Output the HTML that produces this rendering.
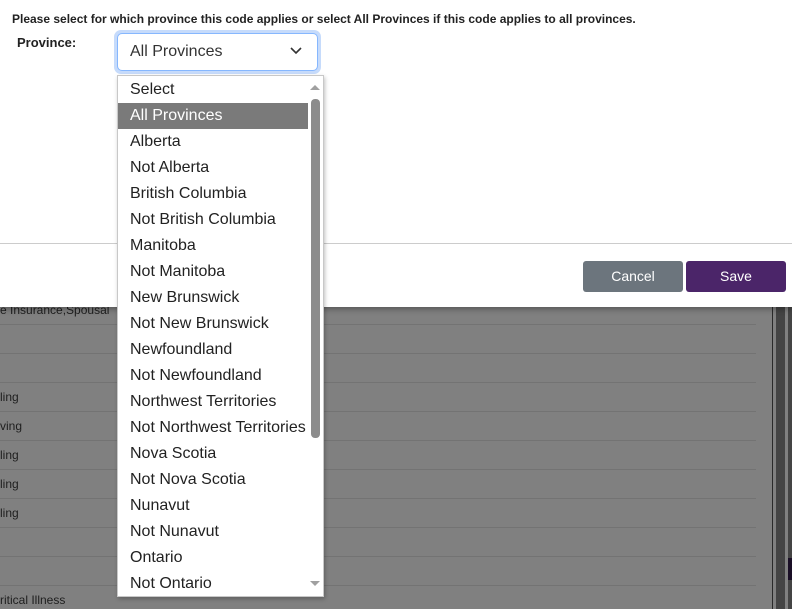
<!DOCTYPE html>
<html><head><meta charset="utf-8"><style>
*{margin:0;padding:0;box-sizing:border-box}
body{width:792px;height:609px;overflow:hidden;position:relative;background:#808080;font-family:"Liberation Sans",Arial,sans-serif}
.abs{position:absolute}
.hl{position:absolute;left:0;width:756px;height:1px;background:#737373}
.bt{position:absolute;left:0;font-size:12px;color:#1e1e1e}
.modal{position:absolute;left:0;top:0;width:792px;height:307px;background:#fff;box-shadow:0 2px 6px rgba(0,0,0,.35)}
.dd{position:absolute;left:117px;top:75px;width:207px;height:522px;background:#fff;border:1px solid #c8c8c8;box-shadow:1px 2px 4px rgba(0,0,0,.25);overflow:hidden;padding-top:1px}
.it{height:26px;line-height:26px;padding-left:12px;font-size:16px;color:#222;width:190px;white-space:nowrap}
.sel{background:#7a7a7a;color:#fff}
</style></head><body>
<div class="hl" style="top:324px"></div><div class="hl" style="top:353px"></div><div class="hl" style="top:382px"></div><div class="hl" style="top:411px"></div><div class="hl" style="top:440px"></div><div class="hl" style="top:469px"></div><div class="hl" style="top:498px"></div><div class="hl" style="top:527px"></div><div class="hl" style="top:556px"></div><div class="hl" style="top:585px"></div>
<div class="bt" style="top:303px">e Insurance,Spousal</div>
<div class="bt" style="top:390px">ling</div>
<div class="bt" style="top:419px">ving</div>
<div class="bt" style="top:448px">ling</div>
<div class="bt" style="top:477px">ling</div>
<div class="bt" style="top:506px">ling</div>
<div class="bt" style="top:593px">ritical Illness</div>
<div class="abs" style="left:772px;top:307px;width:1px;height:302px;background:#2a2a2a"></div>
<div class="abs" style="left:776px;top:307px;width:9px;height:302px;background:#444"></div>
<div class="abs" style="left:788px;top:307px;width:4px;height:302px;background:#444"></div>
<div class="abs" style="left:788px;top:558px;width:4px;height:22px;background:#1a0f26"></div>
<div class="modal">
<div class="abs" style="left:12px;top:12px;font-size:12px;font-weight:bold;color:#222">Please select for which province this code applies or select All Provinces if this code applies to all provinces.</div>
<div class="abs" style="left:17px;top:35px;font-size:13px;font-weight:bold;color:#222">Province:</div>
<div class="abs" style="left:114px;top:30px;width:207px;height:44px;border-radius:7px;background:#c6dbfb"></div>
<div class="abs" style="left:117px;top:33px;width:201px;height:38px;border:1px solid #86b7fe;border-radius:5px;background:#fff"></div>
<div class="abs" style="left:130px;top:43px;font-size:16px;color:#333">All Provinces</div>
<svg class="abs" style="left:289px;top:46px" width="14" height="10"><path d="M2 2 L7 7 L12 2" fill="none" stroke="#333" stroke-width="1.6"/></svg>
<div class="abs" style="left:0;top:243px;width:792px;height:1px;background:#ccc"></div>
<div class="abs" style="left:583px;top:261px;width:100px;height:31px;background:#6c757d;border-radius:3px;color:#fff;font-size:14px;text-align:center;line-height:31px">Cancel</div>
<div class="abs" style="left:686px;top:261px;width:100px;height:31px;background:#4b2569;border-radius:3px;color:#fff;font-size:14px;text-align:center;line-height:31px">Save</div>
</div>
<div class="dd">
<div class="it">Select</div>
<div class="it sel">All Provinces</div>
<div class="it">Alberta</div>
<div class="it">Not Alberta</div>
<div class="it">British Columbia</div>
<div class="it">Not British Columbia</div>
<div class="it">Manitoba</div>
<div class="it">Not Manitoba</div>
<div class="it">New Brunswick</div>
<div class="it">Not New Brunswick</div>
<div class="it">Newfoundland</div>
<div class="it">Not Newfoundland</div>
<div class="it">Northwest Territories</div>
<div class="it">Not Northwest Territories</div>
<div class="it">Nova Scotia</div>
<div class="it">Not Nova Scotia</div>
<div class="it">Nunavut</div>
<div class="it">Not Nunavut</div>
<div class="it">Ontario</div>
<div class="it">Not Ontario</div>
<svg class="abs" style="left:192px;top:8px" width="10" height="8"><path d="M0 6 L5 1 L10 6Z" fill="#a0a0a0"/></svg>
<div class="abs" style="left:193px;top:23px;width:9px;height:339px;background:#8c8c8c;border-radius:4px"></div>
<svg class="abs" style="left:192px;top:504px" width="10" height="8"><path d="M0 1 L5 6 L10 1Z" fill="#a0a0a0"/></svg>
</div>
</body></html>
